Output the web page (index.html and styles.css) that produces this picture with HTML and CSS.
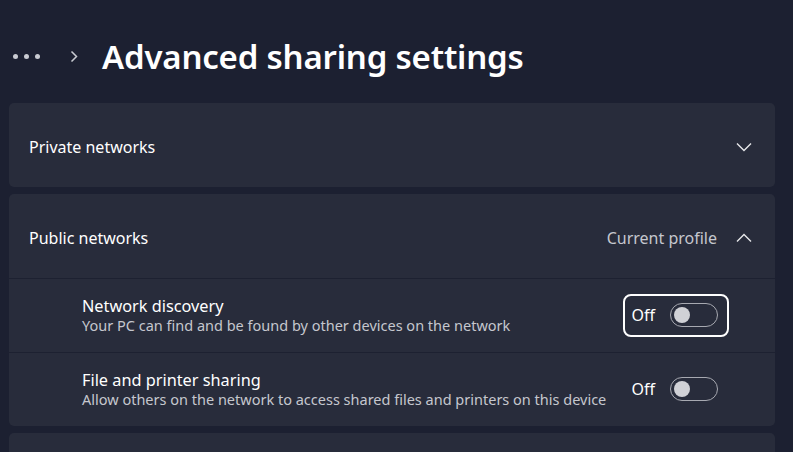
FILE: index.html
```html
<!DOCTYPE html>
<html lang="en">
<head>
    <meta charset="UTF-8">
    <meta name="viewport" content="width=device-width, initial-scale=1.0">
    <title>Advanced sharing settings</title>
    <link rel="stylesheet" href="styles.css">
</head>
<body>
    <div class="header">
        <span class="dots"><i></i><i></i><i></i></span>
        <svg class="crumb" width="8" height="13" viewBox="0 0 8 13"><path d="M1.5 1.5 L6.5 6.5 L1.5 11.5" fill="none" stroke="#c9cbd2" stroke-width="1.5"/></svg>
        <h1>Advanced sharing settings</h1>
    </div>

    <div class="card">
        <div class="card-head">
            <span class="label">Private networks</span>
            <svg class="chev" width="16" height="10" viewBox="0 0 16 10"><path d="M1 1.5 L8 8.5 L15 1.5" fill="none" stroke="#e6e7ea" stroke-width="1.4"/></svg>
        </div>
    </div>

    <div class="card">
        <div class="card-head">
            <span class="label">Public networks</span>
            <span class="note">Current profile</span>
            <svg class="chev" width="16" height="10" viewBox="0 0 16 10"><path d="M1 8.5 L8 1.5 L15 8.5" fill="none" stroke="#e6e7ea" stroke-width="1.4"/></svg>
        </div>
        <div class="row">
            <div class="text">
                <div class="title">Network discovery</div>
                <div class="desc">Your PC can find and be found by other devices on the network</div>
            </div>
            <div class="switch focused">
                <span>Off</span>
                <span class="pill"><span class="knob"></span></span>
            </div>
        </div>
        <div class="row">
            <div class="text">
                <div class="title">File and printer sharing</div>
                <div class="desc">Allow others on the network to access shared files and printers on this device</div>
            </div>
            <div class="switch">
                <span>Off</span>
                <span class="pill"><span class="knob"></span></span>
            </div>
        </div>
    </div>

    <div class="card last"></div>
</body>
</html>
```

FILE: styles.css
```css
:root {
    --bg: #1c2031;
    --card: #282c3b;
    --line: #1d2131;
    --fg: #ffffff;
    --muted: #c5c7ce;
}
body {
    margin: 0;
    background: var(--bg);
    color: var(--fg);
    font-family: "Noto Sans", "Open Sans", sans-serif;
    height: 452px;
    overflow: hidden;
}
.header {
    display: flex;
    align-items: center;
    height: 103px;
    padding: 10px 0 0 13px;
    box-sizing: border-box;
}
.dots {
    display: flex;
    gap: 6px;
}
.dots i {
    width: 5px;
    height: 5px;
    border-radius: 50%;
    background: #c9cbd2;
}
.crumb {
    margin-left: 30px;
}
h1 {
    margin: 0 0 0 24px;
    font-size: 33px;
    font-weight: 600;
    letter-spacing: -0.2px;
}
.card {
    margin: 0 18px 7px 9px;
    background: var(--card);
    border-radius: 5px;
}
.card-head {
    display: flex;
    align-items: center;
    height: 84px;
    box-sizing: border-box;
    padding: 4px 23px 0 20px;
}
.card-head .label {
    flex: 1;
    font-size: 16px;
}
.note {
    color: var(--muted);
    font-size: 16px;
    margin-right: 19px;
}
.row {
    display: flex;
    align-items: center;
    height: 73px;
    border-top: 1px solid var(--line);
    padding: 0 46px 0 73px;
}
.text {
    flex: 1;
}
.title {
    font-size: 16.3px;
    line-height: 20px;
}
.desc {
    font-size: 14.5px;
    line-height: 19px;
    color: var(--muted);
}
.switch {
    display: flex;
    align-items: center;
    gap: 15px;
    padding: 7px 9px 8px 6px;
    border: 2px solid transparent;
    border-radius: 8px;
    font-size: 16px;
}
.switch.focused {
    border-color: #ffffff;
}
.pill {
    width: 46px;
    height: 22px;
    border: 1.5px solid #a7a9b1;
    border-radius: 13px;
    position: relative;
}
.knob {
    position: absolute;
    left: 3px;
    top: 3px;
    width: 16px;
    height: 16px;
    border-radius: 50%;
    background: #d0d1d6;
}
.last {
    height: 40px;
}
```
